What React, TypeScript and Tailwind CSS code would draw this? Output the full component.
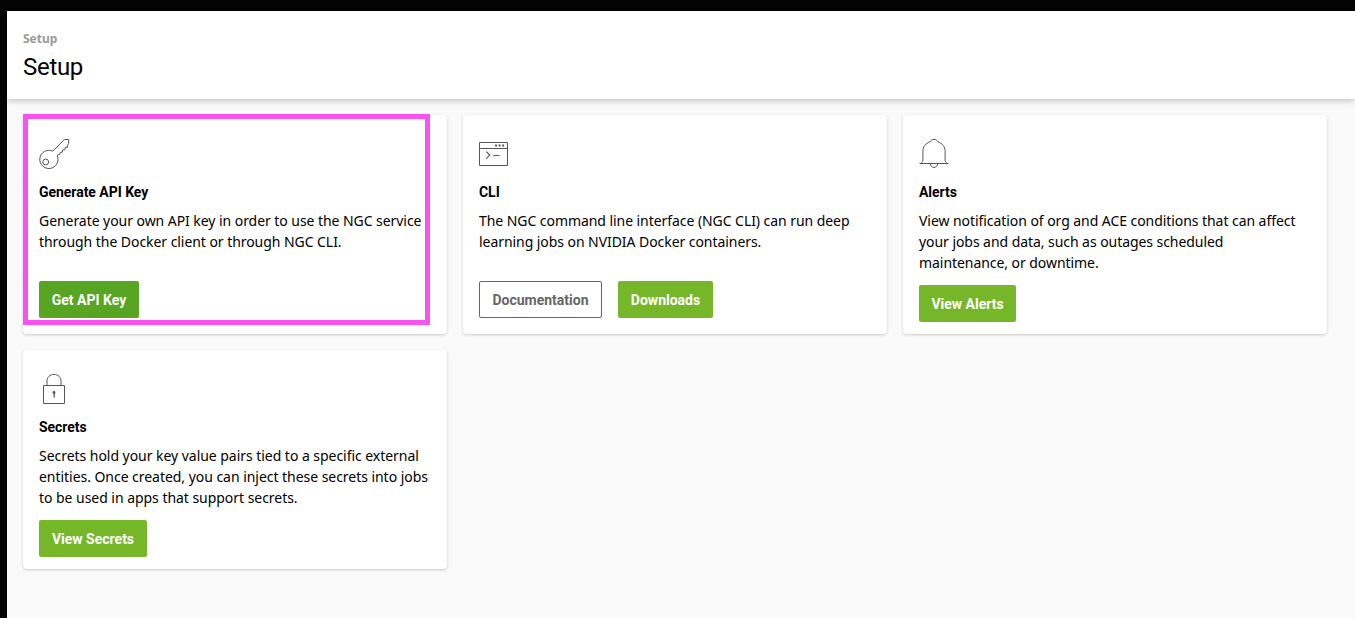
import React from "react";

const svgProps = {
  width: 32,
  height: 32,
  viewBox: "0 0 32 32",
  fill: "none",
  stroke: "#555",
  strokeWidth: 1,
} as const;

function KeyIcon() {
  return (
    <svg {...svgProps}>
      <path d="M13.8 13.2 25.4 1.5h4.3v4l-1.3 1.700v2.100h-2.100l-.4 2.500-2.200.1-.4 2.300-2 .1-.3 1.700-2.900 1.500a9.100 9.100 0 1 1-4.300-4.300Z" />
      <circle cx="6.7" cy="24" r="2.9" />
    </svg>
  );
}

function TerminalIcon() {
  return (
    <svg {...svgProps}>
      <path d="M.5 4.5h28v23H.5zM.5 10.5h28" />
      <path d="M16.1 7.500h2M19.600 7.500h2M23.100 7.500h2" strokeWidth="2" />
      <path d="m7.200 13.600 3.600 3.500-3.600 3.500M14.500 17.500h6" strokeWidth="1.200" />
    </svg>
  );
}

function BellIcon() {
  return (
    <svg {...svgProps}>
      <path d="M.5 25.500h29M1.500 25.300c1.800-1.100 2.400-1.800 2.400-4v-8.100c0-4.500 2.800-8 7.100-9.300.6-1.600 2.200-2.500 4-2.500s3.400.9 4 2.500c4.300 1.300 7.100 4.800 7.100 9.300v8.100c0 2.200.6 2.900 2.400 4M11.300 25.700c.2 2.200 1.600 3.700 3.700 3.700s3.500-1.500 3.700-3.700" />
    </svg>
  );
}

function LockIcon() {
  return (
    <svg {...svgProps}>
      <path d="M4.500 12.500h21v18h-21zM8 12.500V8.300c0-4.200 2.900-6.900 7-6.900s7 2.700 7 6.900v4.200" />
      <circle cx="15" cy="19.500" r="1.400" fill="#555" stroke="none" />
      <path d="M15.200 19.500v5" strokeWidth="1.300" />
    </svg>
  );
}

function Button({ label, look }: { label: string; look: string }) {
  return (
    <button
      className={`flex h-[37px] items-center justify-center rounded-[2px] pt-px font-[Roboto,sans-serif] text-sm font-bold whitespace-nowrap ${look}`}
    >
      {label}
    </button>
  );
}

function Card({
  icon,
  title,
  lines,
  tracking,
  children,
}: {
  icon: React.ReactNode;
  title: string;
  lines: string[];
  tracking: string;
  children: React.ReactNode;
}) {
  return (
    <section className="flex h-[219px] flex-col rounded bg-white px-4 pt-[23px] shadow-[0_1px_3px_rgba(0,0,0,0.2)]">
      {icon}
      <h2 className="mt-3 h-5 font-[Roboto,sans-serif] text-sm leading-5 font-bold tracking-[-0.04px]">
        {title}
      </h2>
      <div className={`mt-2 text-sm leading-[21px] whitespace-nowrap ${tracking}`}>
        {lines.map((line) => (
          <p key={line}>{line}</p>
        ))}
      </div>
      <div className={`flex gap-4 ${lines.length > 2 ? "mt-3" : "mt-[29px]"}`}>{children}</div>
    </section>
  );
}

export default function App() {
  return (
    <div className="h-[618px] overflow-hidden bg-[#030303] pt-[11px] pl-[7px] font-['Noto_Sans',sans-serif] text-black">
      <div className="flex h-full flex-col bg-[#fafafa]">
        <header className="h-[88px] shrink-0 bg-white px-4 pt-5 shadow-[0_2px_6px_rgba(0,0,0,0.22)]">
          <div className="text-xs leading-4 font-bold text-[#999]">Setup</div>
          <h1 className="mt-1 font-[Roboto,sans-serif] text-2xl leading-8 tracking-[-0.3px]">
            Setup
          </h1>
        </header>
        <main className="relative grid grid-cols-[424px_424px_424px] gap-4 px-4 pt-4">
          <Card
            icon={<KeyIcon />}
            title="Generate API Key"
            tracking="tracking-[-0.055px]"
            lines={[
              "Generate your own API key in order to use the NGC service",
              "through the Docker client or through NGC CLI.",
            ]}
          >
            <Button label="Get API Key" look="w-[100px] bg-[#57a523] text-white" />
          </Card>
          <Card
            icon={<TerminalIcon />}
            title="CLI"
            tracking="tracking-[-0.06px]"
            lines={[
              "The NGC command line interface (NGC CLI) can run deep",
              "learning jobs on NVIDIA Docker containers.",
            ]}
          >
            <Button
              label="Documentation"
              look="w-[123px] border border-[#666] bg-white text-[#666]"
            />
            <Button label="Downloads" look="w-[95px] bg-[#76b729] text-white" />
          </Card>
          <Card
            icon={<BellIcon />}
            title="Alerts"
            tracking="tracking-[-0.06px]"
            lines={[
              "View notification of org and ACE conditions that can affect",
              "your jobs and data, such as outages scheduled",
              "maintenance, or downtime.",
            ]}
          >
            <Button label="View Alerts" look="w-[97px] bg-[#76b729] text-white" />
          </Card>
          <Card
            icon={<LockIcon />}
            title="Secrets"
            tracking="tracking-[-0.04px]"
            lines={[
              "Secrets hold your key value pairs tied to a specific external",
              "entities. Once created, you can inject these secrets into jobs",
              "to be used in apps that support secrets.",
            ]}
          >
            <Button label="View Secrets" look="w-[108px] bg-[#76b729] text-white" />
          </Card>
          <div className="pointer-events-none absolute top-[15px] left-4 h-[211px] w-[407px] border-5 border-[#fa52f0]" />
        </main>
      </div>
    </div>
  );
}
